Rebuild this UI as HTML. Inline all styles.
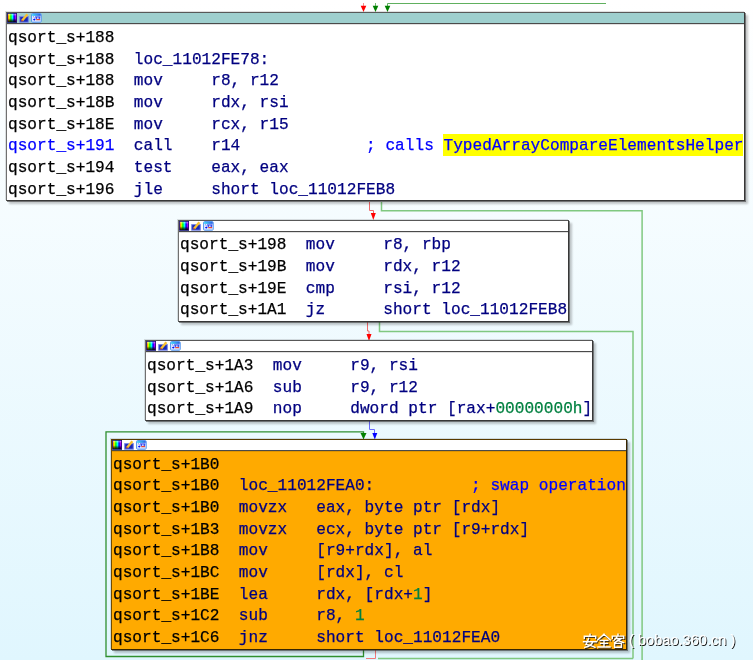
<!DOCTYPE html><html><head><meta charset="utf-8"><style>
html,body{margin:0;padding:0;}
body{width:753px;height:660px;overflow:hidden;position:relative;background:linear-gradient(#FFFFFF 0px,#E0F6FE 660px);font-family:"Liberation Mono",monospace;}
.blk{position:absolute;box-sizing:border-box;background-clip:padding-box;border:1px solid rgba(0,0,0,0.78);border-left-color:rgba(0,0,0,0.56);border-top-color:rgba(0,0,0,0.65);box-shadow:-1px -1px 0 rgba(0,0,0,0.12),1px 1px 0 rgba(50,50,50,0.55),3px 3px 2px rgba(0,0,0,0.22);}
.hdr{position:absolute;left:0;top:0;right:0;height:10px;border-bottom:1px solid #4a4a4a;box-shadow:0 1px 0 rgba(0,0,0,0.12);}
.ln{position:absolute;will-change:transform;white-space:pre;-webkit-text-stroke:0.25px currentColor;font-size:16.126px;line-height:21.67px;height:21.67px;letter-spacing:0.010px;}
svg.edges{position:absolute;left:0;top:0;}
</style></head><body>

<svg class="edges" width="753" height="660" viewBox="0 0 753 660">
<g fill="none" stroke-width="1">
<path d="M387.5 8 V3.5 H606" stroke="#5fb05f"/>
<path d="M363.5 3 V7" stroke="#f49090"/>
<path d="M375.5 3 V7" stroke="#70b870"/>
<path d="M369.5 202 V210.5 H373.5 V214" stroke="#f06a6a"/>
<path d="M381.5 202 V210.8 H642.1 V660" stroke="#80c880" stroke-width="1.5"/>
<path d="M367.5 322 V331 H369 V335" stroke="#f06a6a"/>
<path d="M379.5 322 V331.6 H633 V658.5" stroke="#80c880" stroke-width="1.5"/>
<path d="M369.5 421 V429.5 H374.5 V434" stroke="#6a6aff"/>
<path d="M363.5 650 V656.5 H106 V431.9 H363.5 V434" stroke="#2f8f2f" stroke-width="1.3"/>
<path d="M375.5 650 V658.5 H366" stroke="#f07a7a"/>
<path d="M378 658.5 H633" stroke="#80c880" stroke-width="1.3"/>
</g>
<g stroke="none">
<path d="M360.7 5.8 h5.6 l-2.8 6.2z" fill="#ff0000"/>
<path d="M372.7 5.8 h5.6 l-2.8 6.2z" fill="#008000"/>
<path d="M384.7 5.8 h5.6 l-2.8 6.2z" fill="#008000"/>
<path d="M370.8 213 h5 l-2.5 7z" fill="#ff0000"/>
<path d="M366.5 334 h5 l-2.5 7z" fill="#ff0000"/>
<path d="M360.5 433 h6 l-3 6.5z" fill="#008000"/>
<path d="M372.3 433 h5 l-2.5 6.5z" fill="#0000ff"/>
</g>
</svg>
<div class="blk" style="left:6.0px;top:12.0px;width:739.0px;height:189.0px;background:#FFFFFF">
<div class="hdr" style="background:#9ECFCE"><svg width="40" height="12" viewBox="0 0 40 12" style="position:absolute;left:-1px;top:-1px;overflow:visible">
<defs>
<linearGradient id="rb0" x1="0" x2="1" y1="0" y2="0">
<stop offset="0" stop-color="#ff4000"/><stop offset="0.15" stop-color="#ffff00"/><stop offset="0.35" stop-color="#00ff00"/><stop offset="0.55" stop-color="#00ffff"/><stop offset="0.75" stop-color="#0000ff"/><stop offset="1" stop-color="#ff00ff"/></linearGradient>
<linearGradient id="dk0" x1="0" x2="0" y1="0" y2="1"><stop offset="0" stop-color="#fff" stop-opacity="0.5"/><stop offset="0.3" stop-color="#fff" stop-opacity="0"/><stop offset="0.55" stop-color="#000" stop-opacity="0"/><stop offset="1" stop-color="#000" stop-opacity="1"/></linearGradient>
<linearGradient id="cb0" x1="0" x2="1" y1="0" y2="0"><stop offset="0" stop-color="#30d8f8"/><stop offset="1" stop-color="#1850e0"/></linearGradient>
</defs>
<rect x="1.1" y="1" width="9.9" height="9.8" fill="#0c0c70"/>
<rect x="1.9" y="1.8" width="8.3" height="8.1" fill="url(#rb0)"/>
<rect x="1.9" y="1.8" width="8.3" height="8.1" fill="url(#dk0)"/>
<rect x="13.7" y="4.6" width="8.6" height="5.6" fill="#1828b8" stroke="#7888e8" stroke-width="1"/>
<path d="M16.2 8.6 L21.4 2.2" stroke="#f8c030" stroke-width="2.4"/>
<path d="M15.6 9.4 L16.4 8.2" stroke="#e06020" stroke-width="1.4"/>
<rect x="25.6" y="1.6" width="9.6" height="8.6" rx="1" fill="#e8f0ff" stroke="#4a90f0" stroke-width="1"/>
<rect x="26.1" y="2.1" width="8.6" height="1.7" fill="url(#cb0)"/>
<path d="M26.6 4.6 L28.4 6 M29 4.3 H34.4 V5.5 H29Z" stroke="none" fill="#5868f0"/>
<path d="M27 4.4 L28.6 5.8" stroke="#6a7af0" stroke-width="0.9"/>
<circle cx="30.4" cy="6.0" r="0.9" fill="#3040f0"/><circle cx="33.3" cy="6.0" r="0.9" fill="#3040f0"/>
<path d="M28.3 6.4 L29.7 7.6 L28.3 8.8 L26.9 7.6Z" fill="#0010ff"/>
<rect x="30.1" y="6.9" width="4.1" height="1.4" rx="0.6" fill="#e84838"/>
<rect x="26.1" y="8.8" width="8.6" height="0.9" fill="#a8c8ff"/>
</svg></div>
<div class="ln" style="left:1.20px;top:14.87px"><span style="color:#000000">qsort_s+188</span></div>
<div class="ln" style="left:1.20px;top:36.54px"><span style="color:#000000">qsort_s+188  </span><span style="color:#000080">loc_11012FE78:</span></div>
<div class="ln" style="left:1.20px;top:58.21px"><span style="color:#000000">qsort_s+188  </span><span style="color:#000080">mov     r8, r12</span></div>
<div class="ln" style="left:1.20px;top:79.88px"><span style="color:#000000">qsort_s+18B  </span><span style="color:#000080">mov     rdx, rsi</span></div>
<div class="ln" style="left:1.20px;top:101.55px"><span style="color:#000000">qsort_s+18E  </span><span style="color:#000080">mov     rcx, r15</span></div>
<div style="position:absolute;left:436.16px;top:121.45px;width:299.99px;height:21.7px;background:#FFFF00"></div>
<div class="ln" style="left:1.20px;top:123.22px"><span style="color:#0000FF">qsort_s+191  </span><span style="color:#000080">call    r14</span><span style="color:#0000FF">             ; calls </span><span style="color:#0000FF">TypedArrayCompareElementsHelper</span></div>
<div class="ln" style="left:1.20px;top:144.89px"><span style="color:#000000">qsort_s+194  </span><span style="color:#000080">test    eax, eax</span></div>
<div class="ln" style="left:1.20px;top:166.56px"><span style="color:#000000">qsort_s+196  </span><span style="color:#000080">jle     short loc_11012FEB8</span></div>
</div>
<div class="blk" style="left:178.0px;top:220.0px;width:391.0px;height:101.5px;background:#FFFFFF">
<div class="hdr" style="background:#FFFFFF"><svg width="40" height="12" viewBox="0 0 40 12" style="position:absolute;left:-1px;top:-1px;overflow:visible">
<defs>
<linearGradient id="rb1" x1="0" x2="1" y1="0" y2="0">
<stop offset="0" stop-color="#ff4000"/><stop offset="0.15" stop-color="#ffff00"/><stop offset="0.35" stop-color="#00ff00"/><stop offset="0.55" stop-color="#00ffff"/><stop offset="0.75" stop-color="#0000ff"/><stop offset="1" stop-color="#ff00ff"/></linearGradient>
<linearGradient id="dk1" x1="0" x2="0" y1="0" y2="1"><stop offset="0" stop-color="#fff" stop-opacity="0.5"/><stop offset="0.3" stop-color="#fff" stop-opacity="0"/><stop offset="0.55" stop-color="#000" stop-opacity="0"/><stop offset="1" stop-color="#000" stop-opacity="1"/></linearGradient>
<linearGradient id="cb1" x1="0" x2="1" y1="0" y2="0"><stop offset="0" stop-color="#30d8f8"/><stop offset="1" stop-color="#1850e0"/></linearGradient>
</defs>
<rect x="1.1" y="1" width="9.9" height="9.8" fill="#0c0c70"/>
<rect x="1.9" y="1.8" width="8.3" height="8.1" fill="url(#rb1)"/>
<rect x="1.9" y="1.8" width="8.3" height="8.1" fill="url(#dk1)"/>
<rect x="13.7" y="4.6" width="8.6" height="5.6" fill="#1828b8" stroke="#7888e8" stroke-width="1"/>
<path d="M16.2 8.6 L21.4 2.2" stroke="#f8c030" stroke-width="2.4"/>
<path d="M15.6 9.4 L16.4 8.2" stroke="#e06020" stroke-width="1.4"/>
<rect x="25.6" y="1.6" width="9.6" height="8.6" rx="1" fill="#e8f0ff" stroke="#4a90f0" stroke-width="1"/>
<rect x="26.1" y="2.1" width="8.6" height="1.7" fill="url(#cb1)"/>
<path d="M26.6 4.6 L28.4 6 M29 4.3 H34.4 V5.5 H29Z" stroke="none" fill="#5868f0"/>
<path d="M27 4.4 L28.6 5.8" stroke="#6a7af0" stroke-width="0.9"/>
<circle cx="30.4" cy="6.0" r="0.9" fill="#3040f0"/><circle cx="33.3" cy="6.0" r="0.9" fill="#3040f0"/>
<path d="M28.3 6.4 L29.7 7.6 L28.3 8.8 L26.9 7.6Z" fill="#0010ff"/>
<rect x="30.1" y="6.9" width="4.1" height="1.4" rx="0.6" fill="#e84838"/>
<rect x="26.1" y="8.8" width="8.6" height="0.9" fill="#a8c8ff"/>
</svg></div>
<div class="ln" style="left:1.10px;top:14.37px"><span style="color:#000000">qsort_s+198  </span><span style="color:#000080">mov     r8, rbp</span></div>
<div class="ln" style="left:1.10px;top:36.04px"><span style="color:#000000">qsort_s+19B  </span><span style="color:#000080">mov     rdx, r12</span></div>
<div class="ln" style="left:1.10px;top:57.71px"><span style="color:#000000">qsort_s+19E  </span><span style="color:#000080">cmp     rsi, r12</span></div>
<div class="ln" style="left:1.10px;top:79.38px"><span style="color:#000000">qsort_s+1A1  </span><span style="color:#000080">jz      short loc_11012FEB8</span></div>
</div>
<div class="blk" style="left:145.0px;top:340.0px;width:448.0px;height:81.0px;background:#FFFFFF">
<div class="hdr" style="background:#FFFFFF"><svg width="40" height="12" viewBox="0 0 40 12" style="position:absolute;left:-1px;top:-1px;overflow:visible">
<defs>
<linearGradient id="rb2" x1="0" x2="1" y1="0" y2="0">
<stop offset="0" stop-color="#ff4000"/><stop offset="0.15" stop-color="#ffff00"/><stop offset="0.35" stop-color="#00ff00"/><stop offset="0.55" stop-color="#00ffff"/><stop offset="0.75" stop-color="#0000ff"/><stop offset="1" stop-color="#ff00ff"/></linearGradient>
<linearGradient id="dk2" x1="0" x2="0" y1="0" y2="1"><stop offset="0" stop-color="#fff" stop-opacity="0.5"/><stop offset="0.3" stop-color="#fff" stop-opacity="0"/><stop offset="0.55" stop-color="#000" stop-opacity="0"/><stop offset="1" stop-color="#000" stop-opacity="1"/></linearGradient>
<linearGradient id="cb2" x1="0" x2="1" y1="0" y2="0"><stop offset="0" stop-color="#30d8f8"/><stop offset="1" stop-color="#1850e0"/></linearGradient>
</defs>
<rect x="1.1" y="1" width="9.9" height="9.8" fill="#0c0c70"/>
<rect x="1.9" y="1.8" width="8.3" height="8.1" fill="url(#rb2)"/>
<rect x="1.9" y="1.8" width="8.3" height="8.1" fill="url(#dk2)"/>
<rect x="13.7" y="4.6" width="8.6" height="5.6" fill="#1828b8" stroke="#7888e8" stroke-width="1"/>
<path d="M16.2 8.6 L21.4 2.2" stroke="#f8c030" stroke-width="2.4"/>
<path d="M15.6 9.4 L16.4 8.2" stroke="#e06020" stroke-width="1.4"/>
<rect x="25.6" y="1.6" width="9.6" height="8.6" rx="1" fill="#e8f0ff" stroke="#4a90f0" stroke-width="1"/>
<rect x="26.1" y="2.1" width="8.6" height="1.7" fill="url(#cb2)"/>
<path d="M26.6 4.6 L28.4 6 M29 4.3 H34.4 V5.5 H29Z" stroke="none" fill="#5868f0"/>
<path d="M27 4.4 L28.6 5.8" stroke="#6a7af0" stroke-width="0.9"/>
<circle cx="30.4" cy="6.0" r="0.9" fill="#3040f0"/><circle cx="33.3" cy="6.0" r="0.9" fill="#3040f0"/>
<path d="M28.3 6.4 L29.7 7.6 L28.3 8.8 L26.9 7.6Z" fill="#0010ff"/>
<rect x="30.1" y="6.9" width="4.1" height="1.4" rx="0.6" fill="#e84838"/>
<rect x="26.1" y="8.8" width="8.6" height="0.9" fill="#a8c8ff"/>
</svg></div>
<div class="ln" style="left:0.90px;top:14.97px"><span style="color:#000000">qsort_s+1A3  </span><span style="color:#000080">mov     r9, rsi</span></div>
<div class="ln" style="left:0.90px;top:36.64px"><span style="color:#000000">qsort_s+1A6  </span><span style="color:#000080">sub     r9, r12</span></div>
<div class="ln" style="left:0.90px;top:58.31px"><span style="color:#000000">qsort_s+1A9  </span><span style="color:#000080">nop     dword ptr [rax+</span><span style="color:#008040">00000000h</span><span style="color:#000080">]</span></div>
</div>
<div class="blk" style="left:111.0px;top:439.0px;width:516.0px;height:211.0px;background:#FFAA00">
<div class="hdr" style="background:#FFFFFF"><svg width="40" height="12" viewBox="0 0 40 12" style="position:absolute;left:-1px;top:-1px;overflow:visible">
<defs>
<linearGradient id="rb3" x1="0" x2="1" y1="0" y2="0">
<stop offset="0" stop-color="#ff4000"/><stop offset="0.15" stop-color="#ffff00"/><stop offset="0.35" stop-color="#00ff00"/><stop offset="0.55" stop-color="#00ffff"/><stop offset="0.75" stop-color="#0000ff"/><stop offset="1" stop-color="#ff00ff"/></linearGradient>
<linearGradient id="dk3" x1="0" x2="0" y1="0" y2="1"><stop offset="0" stop-color="#fff" stop-opacity="0.5"/><stop offset="0.3" stop-color="#fff" stop-opacity="0"/><stop offset="0.55" stop-color="#000" stop-opacity="0"/><stop offset="1" stop-color="#000" stop-opacity="1"/></linearGradient>
<linearGradient id="cb3" x1="0" x2="1" y1="0" y2="0"><stop offset="0" stop-color="#30d8f8"/><stop offset="1" stop-color="#1850e0"/></linearGradient>
</defs>
<rect x="1.1" y="1" width="9.9" height="9.8" fill="#0c0c70"/>
<rect x="1.9" y="1.8" width="8.3" height="8.1" fill="url(#rb3)"/>
<rect x="1.9" y="1.8" width="8.3" height="8.1" fill="url(#dk3)"/>
<rect x="13.7" y="4.6" width="8.6" height="5.6" fill="#1828b8" stroke="#7888e8" stroke-width="1"/>
<path d="M16.2 8.6 L21.4 2.2" stroke="#f8c030" stroke-width="2.4"/>
<path d="M15.6 9.4 L16.4 8.2" stroke="#e06020" stroke-width="1.4"/>
<rect x="25.6" y="1.6" width="9.6" height="8.6" rx="1" fill="#e8f0ff" stroke="#4a90f0" stroke-width="1"/>
<rect x="26.1" y="2.1" width="8.6" height="1.7" fill="url(#cb3)"/>
<path d="M26.6 4.6 L28.4 6 M29 4.3 H34.4 V5.5 H29Z" stroke="none" fill="#5868f0"/>
<path d="M27 4.4 L28.6 5.8" stroke="#6a7af0" stroke-width="0.9"/>
<circle cx="30.4" cy="6.0" r="0.9" fill="#3040f0"/><circle cx="33.3" cy="6.0" r="0.9" fill="#3040f0"/>
<path d="M28.3 6.4 L29.7 7.6 L28.3 8.8 L26.9 7.6Z" fill="#0010ff"/>
<rect x="30.1" y="6.9" width="4.1" height="1.4" rx="0.6" fill="#e84838"/>
<rect x="26.1" y="8.8" width="8.6" height="0.9" fill="#a8c8ff"/>
</svg></div>
<div class="ln" style="left:1.30px;top:14.67px"><span style="color:#000000">qsort_s+1B0</span></div>
<div class="ln" style="left:1.30px;top:36.34px"><span style="color:#000000">qsort_s+1B0  </span><span style="color:#000080">loc_11012FEA0:</span><span style="color:#0000FF">          ; swap operation</span></div>
<div class="ln" style="left:1.30px;top:58.01px"><span style="color:#000000">qsort_s+1B0  </span><span style="color:#000080">movzx   eax, byte ptr [rdx]</span></div>
<div class="ln" style="left:1.30px;top:79.68px"><span style="color:#000000">qsort_s+1B3  </span><span style="color:#000080">movzx   ecx, byte ptr [r9+rdx]</span></div>
<div class="ln" style="left:1.30px;top:101.35px"><span style="color:#000000">qsort_s+1B8  </span><span style="color:#000080">mov     [r9+rdx], al</span></div>
<div class="ln" style="left:1.30px;top:123.02px"><span style="color:#000000">qsort_s+1BC  </span><span style="color:#000080">mov     [rdx], cl</span></div>
<div class="ln" style="left:1.30px;top:144.69px"><span style="color:#000000">qsort_s+1BE  </span><span style="color:#000080">lea     rdx, [rdx+</span><span style="color:#008040">1</span><span style="color:#000080">]</span></div>
<div class="ln" style="left:1.30px;top:166.36px"><span style="color:#000000">qsort_s+1C2  </span><span style="color:#000080">sub     r8, </span><span style="color:#008040">1</span></div>
<div class="ln" style="left:1.30px;top:188.03px"><span style="color:#000000">qsort_s+1C6  </span><span style="color:#000080">jnz     short loc_11012FEA0</span></div>
</div>
<svg width="160" height="24" viewBox="0 0 160 24" style="position:absolute;left:580px;top:630px;overflow:visible">
<g transform="translate(3,3.8)" fill="none" stroke-linecap="square">
<g transform="translate(1,1)" stroke="#202020" stroke-opacity="0.85" stroke-width="1.5">
<path d="M7 0.3 V2.2 M1.3 4.6 V2.4 H12.7 V4.6 M0.5 8 H13.5 M5.6 4.6 Q4.6 8 3 10.6 Q8.5 11.6 12 13.6 M9.6 8.2 Q8.8 12 1.8 13.6"/>
<path transform="translate(14,0)" d="M7 0.5 L0.6 6.2 M7 0.5 L13.4 6.2 M3.2 6.6 H10.8 M3.6 9.6 H10.4 M1 13.2 H13 M7 6.6 V13.2"/>
<path transform="translate(28,0)" d="M7 0.3 V2 M1.3 4.4 V2.3 H12.7 V4.4 M5.8 3.4 L3 6.6 M4.8 4.8 H10 L3.6 8.8 M6.5 6.6 L12.6 8.8 M3.6 9.6 V13.4 H10.4 V9.6 Z"/>
</g>
<g stroke="#ffffff" stroke-width="1.4">
<path d="M7 0.3 V2.2 M1.3 4.6 V2.4 H12.7 V4.6 M0.5 8 H13.5 M5.6 4.6 Q4.6 8 3 10.6 Q8.5 11.6 12 13.6 M9.6 8.2 Q8.8 12 1.8 13.6"/>
<path transform="translate(14,0)" d="M7 0.5 L0.6 6.2 M7 0.5 L13.4 6.2 M3.2 6.6 H10.8 M3.6 9.6 H10.4 M1 13.2 H13 M7 6.6 V13.2"/>
<path transform="translate(28,0)" d="M7 0.3 V2 M1.3 4.4 V2.3 H12.7 V4.4 M5.8 3.4 L3 6.6 M4.8 4.8 H10 L3.6 8.8 M6.5 6.6 L12.6 8.8 M3.6 9.6 V13.4 H10.4 V9.6 Z"/>
</g>
</g>
</svg>
<div style="position:absolute;left:629px;top:632px;will-change:transform;font-family:'Liberation Sans',sans-serif;font-size:14.5px;line-height:17px;color:#fff;white-space:pre;letter-spacing:0.05px;-webkit-text-stroke:0.2px #fff;text-shadow:1px 1px 0 #181818">( bobao.360.cn )</div>

</body></html>
